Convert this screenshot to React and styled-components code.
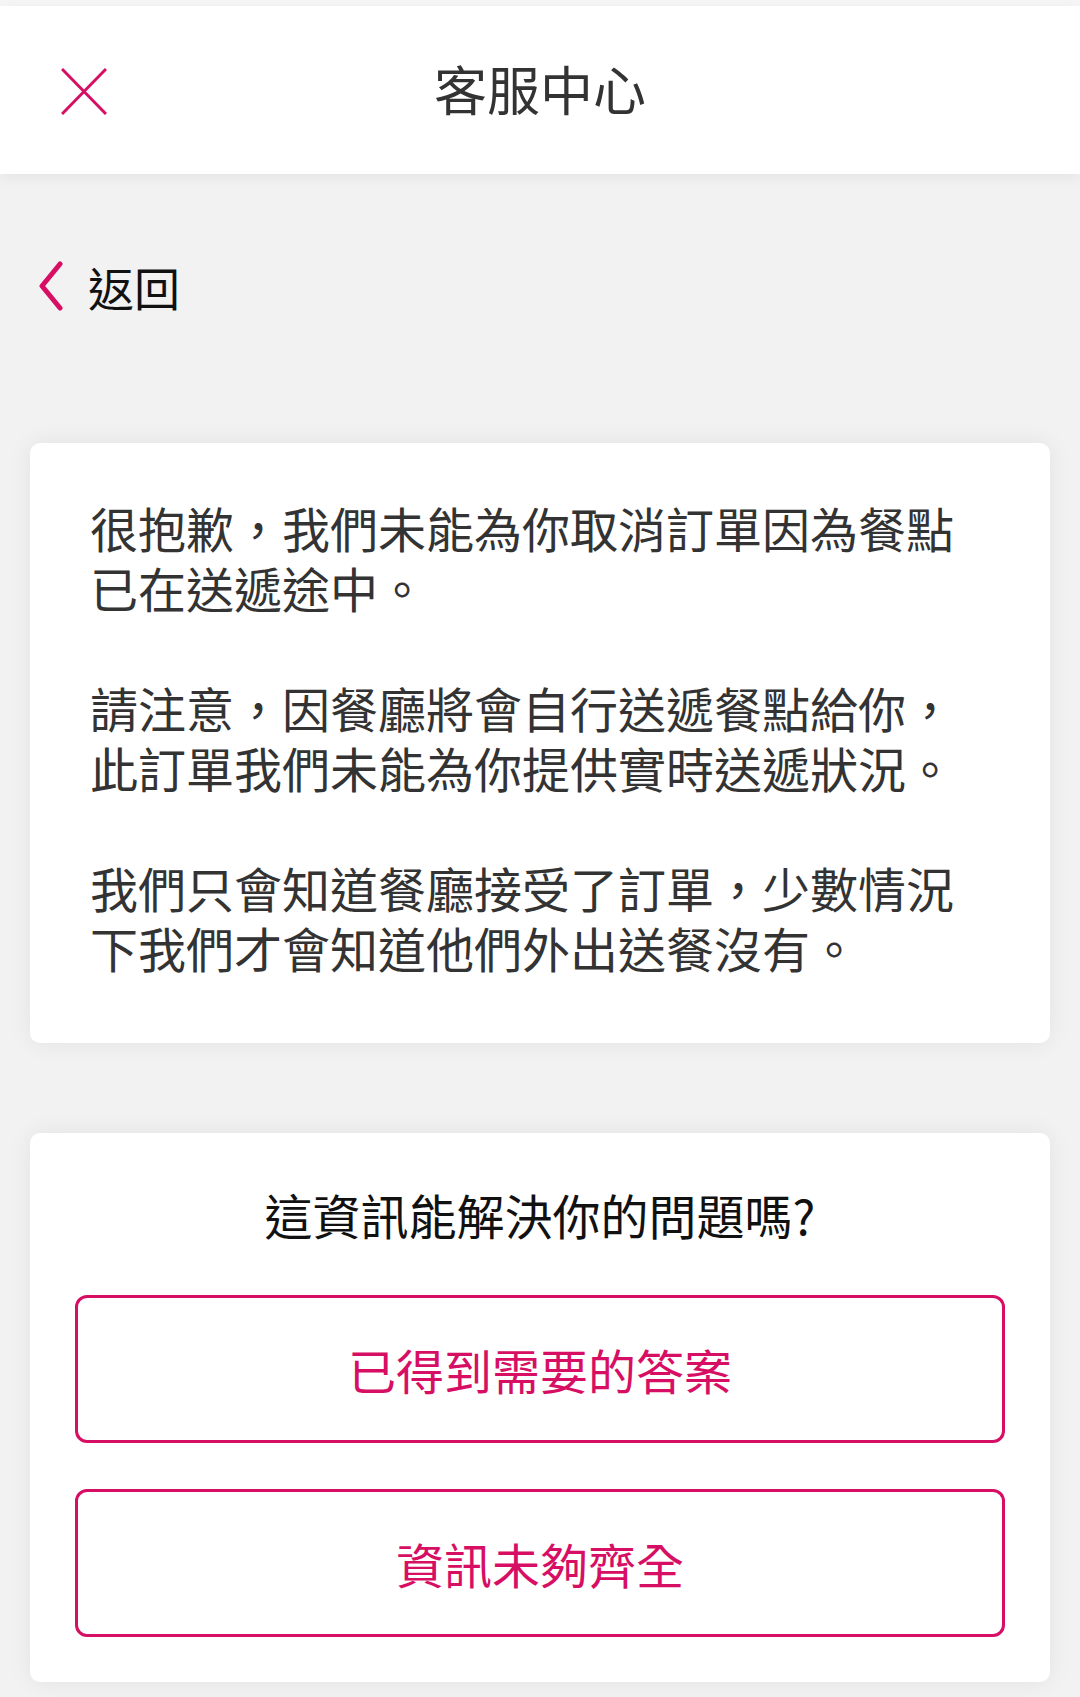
import React from "react";
import styled, { createGlobalStyle } from "styled-components";

const Global = createGlobalStyle`
  html, body {
    margin: 0;
    padding: 0;
    background: #f2f2f2;
  }
  body {
    font-family: "Noto Sans CJK TC", "Noto Sans", sans-serif;
  }
`;

const PINK = "#d70f64";

const Page = styled.div`
  width: 1080px;
  min-height: 1697px;
  background: #f2f2f2;
  border-top: 6px solid #f6f6f6;
  box-sizing: border-box;
`;

const Header = styled.header`
  height: 168px;
  background: #fff;
  display: grid;
  grid-template-columns: 1fr auto 1fr;
  align-items: center;
  box-shadow: 0 4px 14px rgba(0, 0, 0, 0.06);
  position: relative;
  z-index: 1;
`;

const CloseButton = styled.button`
  justify-self: start;
  margin-left: 61px;
  margin-top: 2px;
  padding: 0;
  border: none;
  background: none;
  display: flex;
  cursor: pointer;
`;

const Title = styled.h1`
  margin: 0 0 4px;
  font-size: 53px;
  font-weight: 400;
  color: #333;
  line-height: 1;
`;

const BackRow = styled.div`
  display: flex;
  align-items: center;
  gap: 24px;
  height: 60px;
  margin: 82px 0 0 38px;
  font-size: 46px;
  color: #111;
`;

const Cards = styled.main`
  display: flex;
  flex-direction: column;
  gap: 90px;
  margin: 127px 30px 0 30px;
`;

const Card = styled.section`
  background: #fff;
  border-radius: 10px;
  box-shadow: 0 0 24px rgba(0, 0, 0, 0.07);
  padding: ${(p) => p.$pad};
`;

const Message = styled.p`
  margin: 0;
  font-size: 48px;
  line-height: 60px;
  color: #333;
  & + & {
    margin-top: 60px;
  }
`;

const Question = styled.h2`
  margin: 0 0 51px;
  font-size: 48px;
  font-weight: 400;
  line-height: 60px;
  color: #111;
  text-align: center;
`;

const Answers = styled.div`
  display: flex;
  flex-direction: column;
  gap: 46px;
`;

const AnswerButton = styled.button`
  height: 148px;
  border: 3px solid ${PINK};
  border-radius: 12px;
  background: #fff;
  color: ${PINK};
  font-family: "Noto Sans CJK TC", "Noto Sans", sans-serif;
  font-size: 48px;
  cursor: pointer;
`;

const CloseIcon = () => (
  <svg width="46" height="47" viewBox="0 0 46 47">
    <path d="M1 1 L45 46 M45 1 L1 46" stroke={PINK} strokeWidth="3" fill="none" />
  </svg>
);

const BackIcon = () => (
  <svg width="26" height="50" viewBox="0 0 26 50">
    <polyline
      points="22,3 4,25 22,47"
      stroke={PINK}
      strokeWidth="5"
      strokeLinecap="round"
      strokeLinejoin="round"
      fill="none"
    />
  </svg>
);

export default function App() {
  return (
    <Page>
      <Global />
      <Header>
        <CloseButton aria-label="close">
          <CloseIcon />
        </CloseButton>
        <Title>客服中心</Title>
        <span />
      </Header>
      <BackRow>
        <BackIcon />
        返回
      </BackRow>
      <Cards>
        <Card $pad="54px 60px 66px">
          <Message>很抱歉，我們未能為你取消訂單因為餐點已在送遞途中。</Message>
          <Message>請注意，因餐廳將會自行送遞餐點給你，此訂單我們未能為你提供實時送遞狀況。</Message>
          <Message>我們只會知道餐廳接受了訂單，少數情況下我們才會知道他們外出送餐沒有。</Message>
        </Card>
        <Card $pad="51px 45px 45px">
          <Question>這資訊能解決你的問題嗎?</Question>
          <Answers>
            <AnswerButton>已得到需要的答案</AnswerButton>
            <AnswerButton>資訊未夠齊全</AnswerButton>
          </Answers>
        </Card>
      </Cards>
    </Page>
  );
}
